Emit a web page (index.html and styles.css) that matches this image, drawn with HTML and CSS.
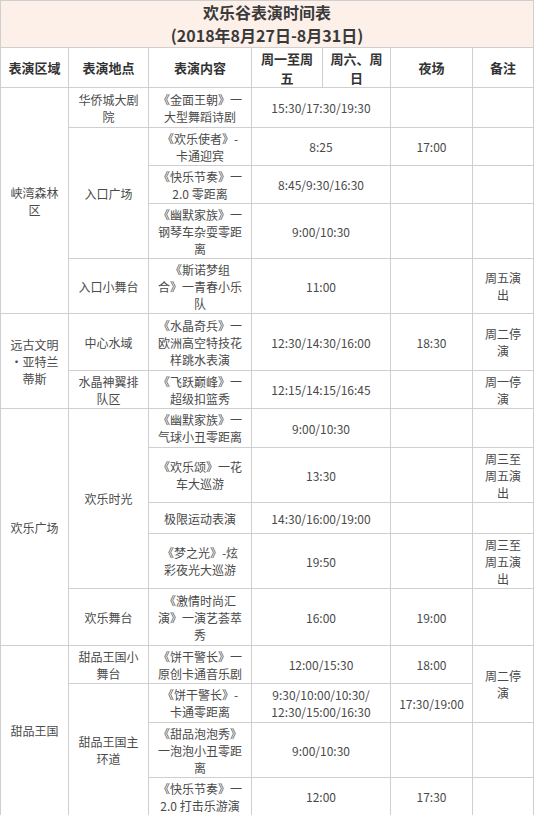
FILE: index.html
```html
<!DOCTYPE html>
<html lang="zh-CN">
<head>
<meta charset="utf-8">
<title>欢乐谷表演时间表</title>
<link rel="stylesheet" href="styles.css">
</head>
<body>
<table class="schedule">
  <colgroup>
    <col class="c-area"><col class="c-place"><col class="c-show"><col class="c-wk"><col class="c-we"><col class="c-night"><col class="c-note">
  </colgroup>
  <thead>
    <tr class="title-row">
      <th colspan="7" class="title">欢乐谷表演时间表<br>(2018年8月27日-8月31日)</th>
    </tr>
    <tr class="head-row">
      <th>表演区域</th>
      <th>表演地点</th>
      <th>表演内容</th>
      <th>周一至周<br>五</th>
      <th>周六、周<br>日</th>
      <th>夜场</th>
      <th>备注</th>
    </tr>
  </thead>
  <tbody>
    <tr class="r2a">
      <td rowspan="5">峡湾森林<br>区</td>
      <td>华侨城大剧<br>院</td>
      <td>《金面王朝》一<br>大型舞蹈诗剧</td>
      <td colspan="2">15:30/17:30/19:30</td>
      <td></td>
      <td></td>
    </tr>
    <tr class="r2">
      <td rowspan="3">入口广场</td>
      <td>《欢乐使者》-<br>卡通迎宾</td>
      <td colspan="2">8:25</td>
      <td>17:00</td>
      <td></td>
    </tr>
    <tr class="r2">
      <td>《快乐节奏》一<br>2.0 零距离</td>
      <td colspan="2">8:45/9:30/16:30</td>
      <td></td>
      <td></td>
    </tr>
    <tr class="r3">
      <td>《幽默家族》一<br>钢琴车杂耍零距<br>离</td>
      <td colspan="2">9:00/10:30</td>
      <td></td>
      <td></td>
    </tr>
    <tr class="r3">
      <td>入口小舞台</td>
      <td>《斯诺梦组<br>合》一青春小乐<br>队</td>
      <td colspan="2">11:00</td>
      <td></td>
      <td>周五演<br>出</td>
    </tr>
    <tr class="r3b">
      <td rowspan="2">远古文明<br>·亚特兰<br>蒂斯</td>
      <td>中心水域</td>
      <td>《水晶奇兵》一<br>欧洲高空特技花<br>样跳水表演</td>
      <td colspan="2">12:30/14:30/16:00</td>
      <td>18:30</td>
      <td>周二停<br>演</td>
    </tr>
    <tr class="r2">
      <td>水晶神翼排<br>队区</td>
      <td>《飞跃巅峰》一<br>超级扣篮秀</td>
      <td colspan="2">12:15/14:15/16:45</td>
      <td></td>
      <td>周一停<br>演</td>
    </tr>
    <tr class="r2b">
      <td rowspan="5">欢乐广场</td>
      <td rowspan="4">欢乐时光</td>
      <td>《幽默家族》一<br>气球小丑零距离</td>
      <td colspan="2">9:00/10:30</td>
      <td></td>
      <td></td>
    </tr>
    <tr class="r3">
      <td>《欢乐颂》一花<br>车大巡游</td>
      <td colspan="2">13:30</td>
      <td></td>
      <td>周三至<br>周五演<br>出</td>
    </tr>
    <tr class="r1">
      <td>极限运动表演</td>
      <td colspan="2">14:30/16:00/19:00</td>
      <td></td>
      <td></td>
    </tr>
    <tr class="r3">
      <td>《梦之光》-炫<br>彩夜光大巡游</td>
      <td colspan="2">19:50</td>
      <td></td>
      <td>周三至<br>周五演<br>出</td>
    </tr>
    <tr class="r3b">
      <td>欢乐舞台</td>
      <td>《激情时尚汇<br>演》一演艺荟萃<br>秀</td>
      <td colspan="2">16:00</td>
      <td>19:00</td>
      <td></td>
    </tr>
    <tr class="r2">
      <td rowspan="4">甜品王国</td>
      <td>甜品王国小<br>舞台</td>
      <td>《饼干警长》一<br>原创卡通音乐剧</td>
      <td colspan="2">12:00/15:30</td>
      <td>18:00</td>
      <td rowspan="2">周二停<br>演</td>
    </tr>
    <tr class="r2b">
      <td rowspan="3">甜品王国主<br>环道</td>
      <td>《饼干警长》-<br>卡通零距离</td>
      <td colspan="2">9:30/10:00/10:30/<br>12:30/15:00/16:30</td>
      <td>17:30/19:00</td>
    </tr>
    <tr class="r3">
      <td>《甜品泡泡秀》<br>一泡泡小丑零距<br>离</td>
      <td colspan="2">9:00/10:30</td>
      <td></td>
      <td></td>
    </tr>
    <tr class="r2">
      <td>《快乐节奏》一<br>2.0 打击乐游演</td>
      <td colspan="2">12:00</td>
      <td>17:30</td>
      <td></td>
    </tr>
  </tbody>
</table>
</body>
</html>
```

FILE: styles.css
```css
html, body {
  margin: 0;
  padding: 0;
  background: #ffffff;
}

body {
  font-family: "Noto Sans CJK SC", "Noto Sans", sans-serif;
  color: #4a4a4a;
}

.schedule {
  width: 533px;
  table-layout: fixed;
  border-collapse: collapse;
  font-size: 12px;
  line-height: 17px;
}

.c-area { width: 68px; }
.c-place { width: 80px; }
.c-show { width: 103px; }
.c-wk { width: 71px; }
.c-we { width: 68px; }
.c-night { width: 82px; }
.c-note { width: 61px; }

.schedule th,
.schedule td {
  border: 1px solid #cfcfcf;
  padding: 0 2px;
  text-align: center;
  vertical-align: middle;
}

.title-row { height: 47px; }

.title {
  background: #fcf0e9;
  color: #3a3a3a;
  font-size: 16px;
  line-height: 23px;
  font-weight: bold;
}

.head-row { height: 40px; }

.head-row th {
  font-size: 13px;
  line-height: 19px;
  font-weight: bold;
  color: #333333;
}

.r1 { height: 31px; }
.r2 { height: 38px; }
.r2a { height: 40px; }
.r2b { height: 39px; }
.r3 { height: 55px; }
.r3b { height: 57px; }
```
